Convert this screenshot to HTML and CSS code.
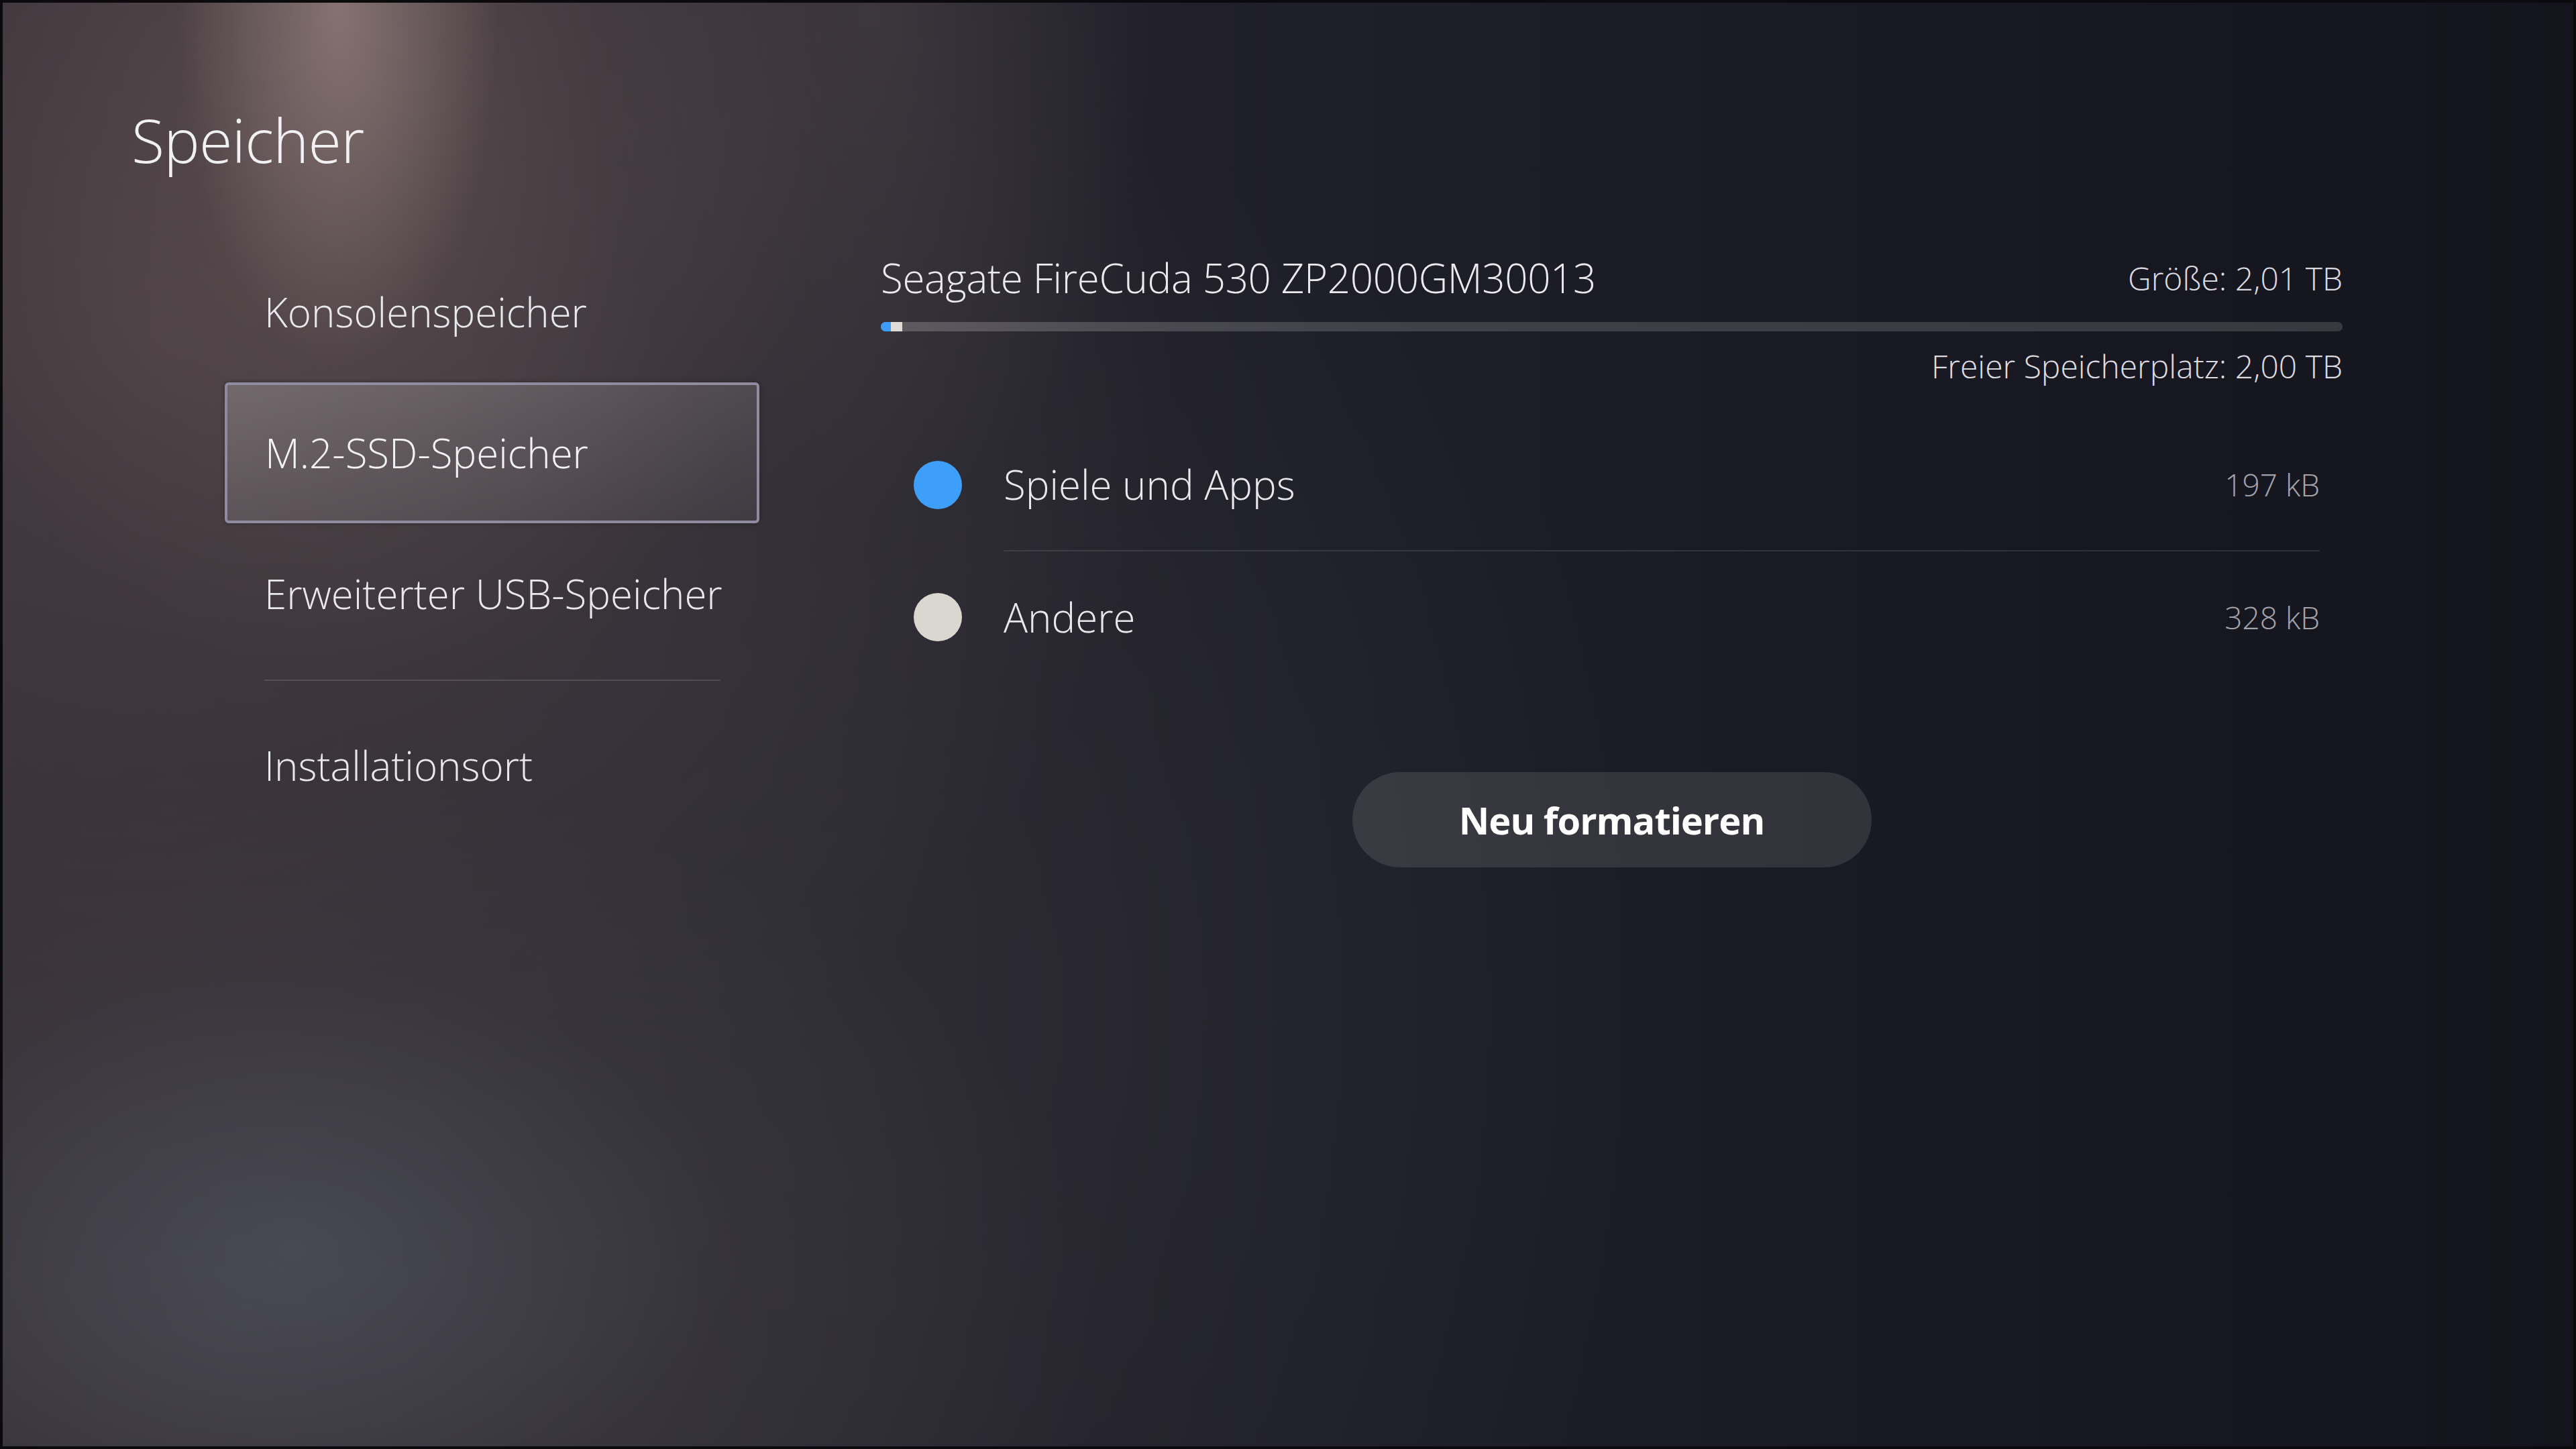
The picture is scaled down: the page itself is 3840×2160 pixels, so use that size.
FILE: index.html
```html
<!DOCTYPE html>
<html lang="de">
<head>
<meta charset="utf-8">
<title>Speicher</title>
<link rel="stylesheet" href="styles.css">
</head>
<body>
<div class="screen">
  <h1 class="title">Speicher</h1>
  <div class="main">
    <nav class="menu">
      <div class="menu-item">Konsolenspeicher</div>
      <div class="menu-item selected">M.2-SSD-Speicher</div>
      <div class="menu-item">Erweiterter USB-Speicher</div>
      <div class="menu-divider"></div>
      <div class="menu-item">Installationsort</div>
    </nav>
    <section class="panel">
      <div class="head">
        <div class="disk-name">Seagate FireCuda 530 ZP2000GM30013</div>
        <div class="meta">Größe: 2,01 TB</div>
      </div>
      <div class="bar">
        <div class="bar-seg seg-blue"></div>
        <div class="bar-seg seg-grey"></div>
      </div>
      <div class="free meta">Freier Speicherplatz: 2,00 TB</div>
      <div class="list">
        <div class="row">
          <span class="dot dot-blue"></span>
          <div class="row-body">
            <span class="row-label">Spiele und Apps</span>
            <span class="row-value">197 kB</span>
          </div>
        </div>
        <div class="row">
          <span class="dot dot-grey"></span>
          <div class="row-body last">
            <span class="row-label">Andere</span>
            <span class="row-value">328 kB</span>
          </div>
        </div>
      </div>
      <button class="btn">Neu formatieren</button>
    </section>
  </div>
</div>
</body>
</html>
```
FILE: styles.css
```css
html, body {
  margin: 0;
  padding: 0;
  background: #0a0a0d;
}

body {
  width: 3840px;
  height: 2160px;
  overflow: hidden;
  font-family: "Open Sans", "Noto Sans", "DejaVu Sans", sans-serif;
  color: #ebeaee;
}

.screen {
  box-sizing: border-box;
  width: 3840px;
  height: 2160px;
  border: 4px solid #0b0b0e;
  padding: 154px 0 0 192px;
  background:
    radial-gradient(ellipse 240px 540px at 500px 0px, rgba(175, 150, 145, 0.55), rgba(175, 150, 145, 0) 100%),
    radial-gradient(ellipse 700px 900px at 540px 120px, rgba(140, 115, 112, 0.33), rgba(140, 115, 112, 0) 100%),
    radial-gradient(ellipse 420px 760px at 1300px 0px, rgba(120, 105, 105, 0.22), rgba(120, 105, 105, 0) 100%),
    radial-gradient(ellipse 1500px 1300px at 250px 500px, rgba(95, 80, 82, 0.5), rgba(95, 80, 82, 0) 100%),
    radial-gradient(ellipse 650px 420px at 430px 1860px, rgba(85, 95, 108, 0.42), rgba(85, 95, 108, 0) 100%),
    radial-gradient(ellipse 1300px 800px at 350px 1950px, rgba(78, 72, 80, 0.55), rgba(78, 72, 80, 0) 100%),
    radial-gradient(ellipse 1300px 1400px at 1200px 1500px, rgba(55, 55, 63, 0.45), rgba(55, 55, 63, 0) 100%),
    linear-gradient(90deg, #302b32 0%, #2a272f 25%, #1f1f29 50%, #191923 75%, #14141d 100%);
}

.title {
  margin: 0;
  font-size: 90px;
  line-height: 100px;
  font-weight: 300;
  letter-spacing: -0.8px;
  color: #f1f0f2;
}

.main {
  display: flex;
  margin-top: 102px;
  margin-left: 139px;
  gap: 181px;
}

/* left menu */
.menu {
  width: 797px;
  display: flex;
  flex-direction: column;
}

.menu-item {
  box-sizing: border-box;
  height: 210px;
  display: flex;
  align-items: center;
  padding-left: 56px;
  border: 3px solid transparent;
  border-radius: 6px;
  font-size: 60px;
  font-weight: 300;
  letter-spacing: 0;
  color: #e9e8ec;
}

.menu-item.selected {
  border: 4px solid #8f8ca0;
  background:
    linear-gradient(165deg, rgba(255, 255, 255, 0.2) 0%, rgba(255, 255, 255, 0.12) 45%, rgba(255, 255, 255, 0.05) 100%);
  box-shadow: 0 0 6px rgba(0, 0, 0, 0.35);
  color: #f3f2f5;
}

.menu-divider {
  height: 2px;
  margin: 23px 58px 21px 59px;
  background: rgba(255, 255, 255, 0.13);
}

/* right panel */
.panel {
  width: 2179px;
  padding-top: 14px;
  display: flex;
  flex-direction: column;
}

.head {
  height: 80px;
  display: flex;
  align-items: center;
  justify-content: space-between;
}

.disk-name {
  font-size: 60px;
  font-weight: 300;
  letter-spacing: -0.3px;
  color: #ebeaee;
}

.meta {
  font-size: 48px;
  font-weight: 300;
  letter-spacing: 0;
  color: #dcdbe0;
}

.bar {
  margin-top: 26px;
  height: 14px;
  border-radius: 7px;
  background: linear-gradient(90deg, rgba(255, 255, 255, 0.2), rgba(255, 255, 255, 0.15) 40%, rgba(255, 255, 255, 0.15));
  display: flex;
  overflow: hidden;
}

.bar-seg {
  height: 100%;
}

.seg-blue {
  width: 15px;
  background: #3d9dfb;
}

.seg-grey {
  width: 17px;
  background: #dedbd4;
}

.free {
  margin-top: 22px;
  line-height: 60px;
  text-align: right;
}

.list {
  margin-top: 48px;
  padding: 0 34px 0 49px;
}

.row {
  display: flex;
  align-items: center;
  gap: 62px;
}

.dot {
  width: 72px;
  height: 72px;
  border-radius: 50%;
  flex: none;
}

.dot-blue {
  background: #3e9ffb;
}

.dot-grey {
  background: #dad7d1;
}

.row-body {
  flex: 1;
  height: 196px;
  display: flex;
  align-items: center;
  justify-content: space-between;
  border-bottom: 2px solid rgba(255, 255, 255, 0.1);
}

.row-body.last {
  border-bottom: none;
}

.row-label {
  font-size: 60px;
  font-weight: 300;
  letter-spacing: 0;
  color: #e9e8ec;
}

.row-value {
  font-size: 46px;
  font-weight: 300;
  letter-spacing: 0;
  color: #a4a3ab;
}

.btn {
  align-self: center;
  margin-top: 133px;
  width: 774px;
  height: 142px;
  border: none;
  border-radius: 71px;
  background: rgba(255, 255, 255, 0.11);
  color: #ffffff;
  font-family: "Open Sans", "Noto Sans", "DejaVu Sans", sans-serif;
  font-size: 56px;
  font-weight: 700;
  letter-spacing: -1px;
  cursor: pointer;
}
```
